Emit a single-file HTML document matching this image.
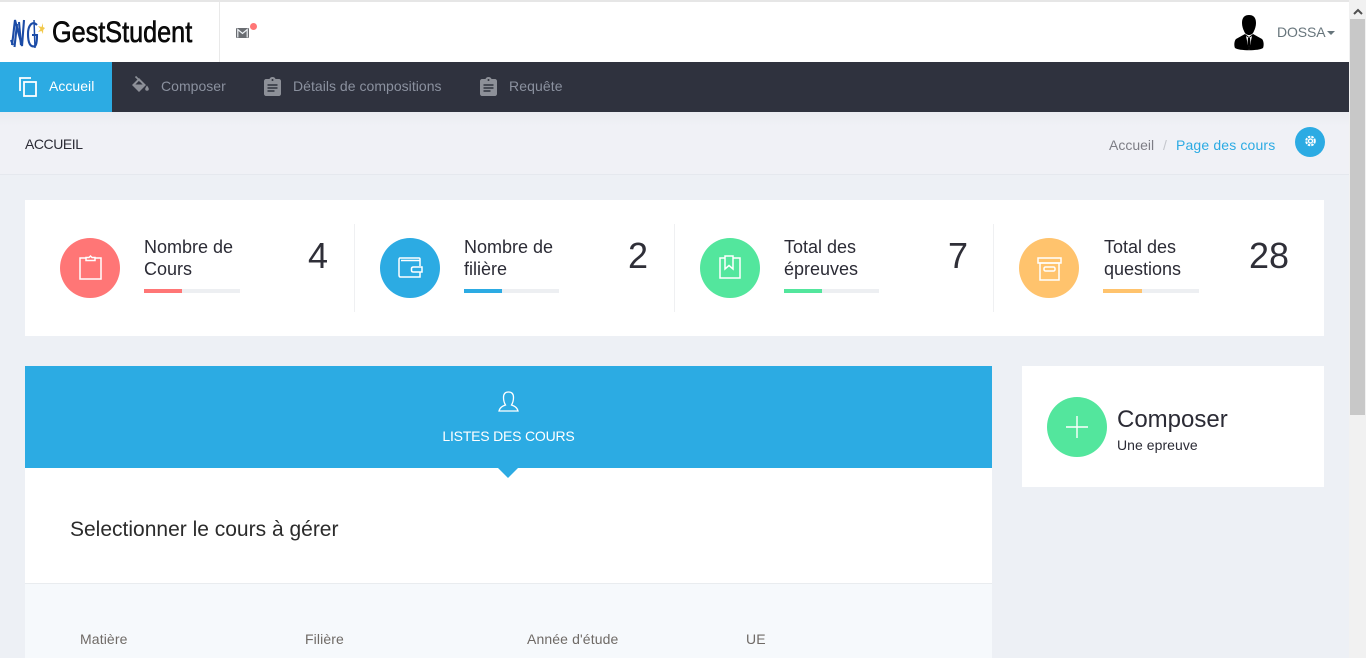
<!DOCTYPE html>
<html lang="fr"><head><meta charset="utf-8"><title>GestStudent</title>
<style>
*{box-sizing:border-box}
html,body{margin:0;padding:0;width:1366px;height:658px;overflow:hidden;background:#edf0f5;font-family:"Liberation Sans",sans-serif;color:#2f2f2f}
.a{position:absolute}
.t{position:absolute;white-space:nowrap}
svg{position:absolute;overflow:visible}
.circle{position:absolute;width:60px;height:60px;border-radius:50%;top:238px}
.lab{position:absolute;top:236px;font-size:18px;line-height:22px;color:#2b2b35;white-space:nowrap}
.bar{position:absolute;top:289px;height:4px;background:#edeff2}
.bar i{position:absolute;left:0;top:0;height:4px;width:38px;display:block}
.num{position:absolute;top:234px;font-size:36px;line-height:44px;color:#2f2f38;text-align:right;width:60px}
.sep{position:absolute;top:224px;width:1px;height:88px;background:#eff0f2}
.nav{position:absolute;top:78px;font-size:14px;line-height:16px;color:#8b919f;white-space:nowrap;letter-spacing:.03px}
.th{position:absolute;top:631px;font-size:14px;line-height:16px;color:#6f6a66;white-space:nowrap;letter-spacing:.12px}
</style></head><body>

<div class="a" style="left:0;top:0;width:1349px;height:62px;background:#fff;border-top:2px solid #e6e6e6"></div>
<div class="a" style="left:219px;top:2px;width:1px;height:60px;background:#e9e9e9"></div>

<!-- logo -->
<svg style="left:10px;top:18px" width="34" height="32" viewBox="0 0 34 32" fill="none" stroke="#1b4ba6" stroke-width="2.100">
<path d="M2 27 C3 20 4 10 5 2 L12 28 L14 2"/>
<path d="M1 22 L3 27 M7 6 L4.500 29 M9 4 L11 27"/>
<path d="M27 7 C22 2 18 8 18 16 C18 24 20 30 25 28 C27 27 27 20 27 17 L22 17"/>
<path d="M24 2 L25 30" stroke-width="1.500"/>
<path d="M33 5 L31.500 9 L28 8 L30.500 11 L28 14 L31.500 13 L33 16 L33.200 12 L35 10 L33 9 Z" fill="#f2c94c" stroke="none"/>
</svg>
<div class="t" style="left:52px;top:16px;font-size:29.500px;line-height:34px;font-weight:normal;color:#0b0b0b;transform:scaleX(.855);transform-origin:0 0;-webkit-text-stroke:.6px #000">GestStudent</div>

<!-- mail -->
<div class="a" style="left:236px;top:28px;width:13px;height:10px;background:#6a6d72;border-radius:1px"></div>
<svg style="left:236px;top:28px" width="13" height="10" fill="none" stroke="#eef2f6" stroke-width="1.200"><path d="M1.800 9.500 V1.500 L6.500 5.500 L11.200 1.500 V9.500"/></svg>
<div class="a" style="left:250px;top:23px;width:7px;height:7px;border-radius:50%;background:#ff7676"></div>

<!-- avatar -->
<svg style="left:1234px;top:15px" width="30" height="36" viewBox="0 0 30 36">
<path d="M8 8 C8 2 11 0 15 0 C19 0 22 2 22 8 C22 11 21 14 20 16 C19 19 17 20 15 20 C13 20 11 19 10 16 C9 14 8 11 8 8Z" fill="#000"/>
<path d="M11 19 L2 24 C0 26 0 31 1 33 C5 36 25 36 29 33 C30 31 30 26 28 24 L19 19 L15 22Z" fill="#000"/>
<path d="M12 21 L15 35 L18 21 L15 23Z" fill="#fff"/>
<path d="M14 23 L16 23 L16.300 26 L15.800 33 L15 34.500 L14.200 33 L13.700 26Z" fill="#000"/>
</svg>
<div class="t" style="left:1277px;top:24px;font-size:14px;line-height:16px;color:#67757c;letter-spacing:-.1px">DOSSA</div>
<div class="a" style="left:1327px;top:31px;width:0;height:0;border-left:4px solid transparent;border-right:4px solid transparent;border-top:4px solid #67757c"></div>

<!-- nav -->
<div class="a" style="left:0;top:62px;width:1349px;height:50px;background:#2f323e"></div>
<div class="a" style="left:0;top:62px;width:112px;height:50px;background:#2cabe3"></div>
<svg style="left:19px;top:77px" width="18" height="20" fill="none" stroke="#fff" stroke-width="1.800"><path d="M1 14 V1 H12"/><rect x="5" y="5" width="12" height="14"/></svg>
<div class="nav" style="left:49px;color:#fff">Accueil</div>

<svg style="left:132px;top:76px" width="18" height="18" viewBox="0 0 18 18" fill="#8d9098"><path fill-rule="evenodd" d="M7 2 L14 9 L7 16 L0 9Z M7 4.700 L3.400 8.500 H10.600Z"/><path d="M3.500 .5 L8 5" stroke="#8d9098" stroke-width="1.600"/><path d="M15 9.500 C16 11 16.800 12 16.800 13 A1.800 1.800 0 0 1 13.200 13 C13.200 12 14 11 15 9.500Z"/></svg>
<div class="nav" style="left:161px">Composer</div>

<svg style="left:264px;top:77px" width="17" height="19" viewBox="0 0 17 19"><path d="M2 2 H5.500 C6 .6 7 0 8.500 0 C10 0 11 .6 11.500 2 H15 C16 2 17 3 17 4 V17 C17 18 16 19 15 19 H2 C1 19 0 18 0 17 V4 C0 3 1 2 2 2Z" fill="#8d9098"/><path d="M3.500 8 H13.500 M3.500 11 H13.500 M3.500 14 H10.500" stroke="#2f323e" stroke-width="1.500"/><circle cx="8.500" cy="3" r="1" fill="#2f323e"/></svg>
<div class="nav" style="left:293px">Détails de compositions</div>

<svg style="left:480px;top:77px" width="17" height="19" viewBox="0 0 17 19"><path d="M2 2 H5.500 C6 .6 7 0 8.500 0 C10 0 11 .6 11.500 2 H15 C16 2 17 3 17 4 V17 C17 18 16 19 15 19 H2 C1 19 0 18 0 17 V4 C0 3 1 2 2 2Z" fill="#8d9098"/><path d="M3.500 8 H13.500 M3.500 11 H13.500 M3.500 14 H10.500" stroke="#2f323e" stroke-width="1.500"/><circle cx="8.500" cy="3" r="1" fill="#2f323e"/></svg>
<div class="nav" style="left:509px;letter-spacing:.1px">Requête</div>

<!-- breadcrumb -->
<div class="a" style="left:0;top:112px;width:1349px;height:63px;background:linear-gradient(#eaecf1,#f0f1f6 14px);border-bottom:1px solid #e5e8ee"></div>
<div class="t" style="left:25px;top:136px;font-size:14px;line-height:16px;color:#2b2b35;letter-spacing:-.45px">ACCUEIL</div>
<div class="t" style="left:1109px;top:137px;font-size:14px;line-height:16px;color:#7d7d85">Accueil</div>
<div class="t" style="left:1163px;top:137px;font-size:14px;line-height:16px;color:#c4c6cc">/</div>
<div class="t" style="left:1176px;top:137px;font-size:14px;line-height:16px;color:#2cabe3;letter-spacing:.15px">Page des cours</div>
<div class="a" style="left:1295px;top:127px;width:30px;height:30px;border-radius:50%;background:#2cabe3"></div>
<svg style="left:1304px;top:134px" width="13" height="14" viewBox="0 0 13 14" fill="none" stroke="#fff"><circle cx="6.500" cy="7" r="2" stroke-width="1.400"/><circle cx="6.500" cy="7" r="4.300" stroke-width="2" stroke-dasharray="2.400 1.100"/></svg>

<!-- stats -->
<div class="a" style="left:25px;top:200px;width:1299px;height:136px;background:#fff"></div>

<div class="circle" style="left:60px;background:#ff7676"></div>
<svg style="left:79px;top:255px" width="23" height="25" fill="none" stroke="#fff" stroke-width="1.500"><path d="M7 3 H1 V24 H22 V3 H16"/><path d="M7 5.500 V2.500 H10 L11.500 1 L13 2.500 H16 V5.500Z"/></svg>
<div class="lab" style="left:144px">Nombre de<br>Cours</div>
<div class="bar" style="left:144px;width:96px"><i style="background:#ff7676"></i></div>
<div class="num" style="left:268px">4</div>
<div class="sep" style="left:354px"></div>

<div class="circle" style="left:380px;background:#2cabe3"></div>
<svg style="left:398px;top:257px" width="25" height="21" fill="none" stroke="#fff" stroke-width="1.500"><path d="M22 9 V2 C22 1 21.500 1 21 1 H2 C1 1 1 2 1 3 V18 C1 19 1.500 20 2.500 20 H22 V15"/><path d="M3 3.500 H22"/><path d="M24 10 V15 H15.500 C14 15 13.500 14.500 13.500 13.500 V11.500 C13.500 10.500 14 10 15.500 10Z"/></svg>
<div class="lab" style="left:464px">Nombre de<br>filière</div>
<div class="bar" style="left:464px;width:95px"><i style="background:#2cabe3"></i></div>
<div class="num" style="left:588px">2</div>
<div class="sep" style="left:674px"></div>

<div class="circle" style="left:700px;background:#53e69d"></div>
<svg style="left:719px;top:255px" width="22" height="24" fill="none" stroke="#fff" stroke-width="1.500"><rect x="1" y="3" width="20" height="20"/><path d="M6 1 H14 V14 L10 10.500 L6 14Z" fill="#53e69d"/></svg>
<div class="lab" style="left:784px">Total des<br>épreuves</div>
<div class="bar" style="left:784px;width:95px"><i style="background:#53e69d"></i></div>
<div class="num" style="left:908px">7</div>
<div class="sep" style="left:993px"></div>

<div class="circle" style="left:1019px;background:#ffc36d"></div>
<svg style="left:1037px;top:257px" width="25" height="24" fill="none" stroke="#fff" stroke-width="1.500"><rect x="1" y="1" width="23" height="5"/><rect x="3" y="6" width="19" height="17"/><rect x="7" y="10" width="11" height="4" rx="1.500"/></svg>
<div class="lab" style="left:1104px">Total des<br>questions</div>
<div class="bar" style="left:1103px;width:96px"><i style="background:#ffc36d;width:39px"></i></div>
<div class="num" style="left:1229px">28</div>

<!-- main panel -->
<div class="a" style="left:25px;top:366px;width:967px;height:292px;background:#fff"></div>
<div class="a" style="left:25px;top:366px;width:967px;height:102px;background:#2cabe3"></div>
<div class="a" style="left:498px;top:468px;width:0;height:0;border-left:10px solid transparent;border-right:10px solid transparent;border-top:10px solid #2cabe3"></div>
<svg style="left:498px;top:391px" width="21" height="21" fill="none" stroke="#fff" stroke-width="1.300"><path d="M7.500 14 C6 11.500 5.500 9 5.500 6.500 C5.500 3 7 1 10.500 1 C14 1 15.500 3 15.500 6.500 C15.500 9 15 11.500 13.500 14 C16 15 19 16 20 20 H1 C2 16 5 15 7.500 14Z"/></svg>
<div class="t" style="left:25px;width:967px;text-align:center;top:428px;font-size:14px;line-height:16px;color:#fff;letter-spacing:-.2px">LISTES DES COURS</div>
<div class="t" style="left:70px;top:518px;font-size:21px;line-height:24px;color:#2b2b2b">Selectionner le cours à gérer</div>
<div class="a" style="left:25px;top:583px;width:967px;height:75px;background:#f6f9fc;border-top:1px solid #e9ecef"></div>
<div class="th" style="left:80px">Matière</div>
<div class="th" style="left:305px">Filière</div>
<div class="th" style="left:527px">Année d'étude</div>
<div class="th" style="left:746px">UE</div>

<!-- compose card -->
<div class="a" style="left:1022px;top:366px;width:302px;height:121px;background:#fff"></div>
<div class="a" style="left:1047px;top:397px;width:60px;height:60px;border-radius:50%;background:#53e69d"></div>
<svg style="left:1066px;top:416px" width="22" height="22" stroke="#fff" stroke-width="1.400"><path d="M11 0 V22 M0 11 H22"/></svg>
<div class="t" style="left:1117px;top:405px;font-size:24px;line-height:30px;color:#2b2b35">Composer</div>
<div class="t" style="left:1117px;top:437px;font-size:14px;line-height:16px;color:#2b2b35;letter-spacing:.05px">Une epreuve</div>

<!-- scrollbar -->
<div class="a" style="left:1349px;top:0;width:17px;height:658px;background:#f1f1f1"></div>
<div class="a" style="left:1350px;top:19px;width:15px;height:396px;background:#c8c8c8"></div>
<svg style="left:1353px;top:8px" width="10" height="7" fill="none" stroke="#505050" stroke-width="2"><path d="M1 6 L5 2 L9 6"/></svg>
</body></html>
